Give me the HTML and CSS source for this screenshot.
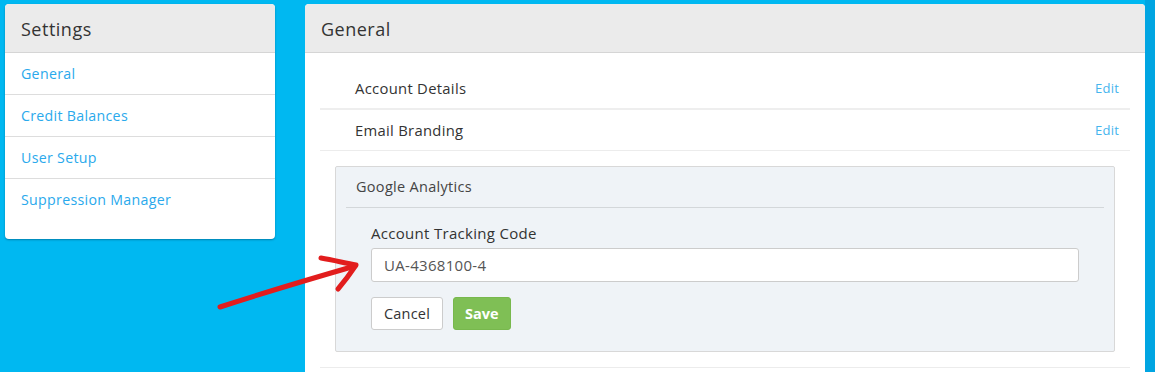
FILE: index.html
```html
<!DOCTYPE html>
<html>
  <head>
    <meta charset="UTF-8" />
    <title>Settings</title>
    <link rel="stylesheet" href="styles.css">
  </head>
  <body>
    <div class="page">
      <div class="card sidebar">
        <div class="card-header">Settings</div>
        <ul class="nav">
          <li><a href="#">General</a></li>
          <li><a href="#">Credit Balances</a></li>
          <li><a href="#">User Setup</a></li>
          <li><a href="#">Suppression Manager</a></li>
        </ul>
      </div>

      <div class="card main">
        <div class="card-header">General</div>
        <div class="card-body">
          <div class="row first">
            <span>Account Details</span>
            <a href="#" class="edit">Edit</a>
          </div>
          <div class="row">
            <span>Email Branding</span>
            <a href="#" class="edit">Edit</a>
          </div>
          <div class="row open">
            <div class="panel">
              <div class="panel-header">Google Analytics</div>
              <div class="panel-form">
                <label for="tracking">Account Tracking Code</label>
                <input id="tracking" type="text" value="UA-4368100-4" />
                <div class="actions">
                  <button class="btn">Cancel</button>
                  <button class="btn btn-save">Save</button>
                </div>
              </div>
            </div>
          </div>
        </div>
      </div>

      <div class="edge"></div>
    </div>

    <!-- hand drawn arrow on top of the screenshot -->
    <svg class="arrow" width="160" height="70" viewBox="0 0 160 70">
      <g fill="none" stroke="#e21d1d" stroke-width="5" stroke-linecap="round" stroke-linejoin="round">
        <path d="M5 63 C45 50 95 35 140 22" />
        <path d="M106 14 C118 16 130 19 141 21 C135 30 129 38 123 45" />
      </g>
    </svg>
  </body>
</html>
```

FILE: styles.css
```css
body {
  margin: 0;
  background-color: #00b8f1;
  font-family: "Open Sans", Arial, sans-serif;
  color: #333333;
  letter-spacing: 0.3px;
  overflow: hidden;
}
a {
  text-decoration: none;
}
.page {
  display: flex;
  align-items: flex-start;
  height: 372px;
  padding: 4px 0 0 5px;
  box-sizing: border-box;
}
.card {
  background-color: #ffffff;
  border-radius: 4px;
  overflow: hidden;
}
.card-header {
  height: 48px;
  line-height: 50px;
  padding-left: 16px;
  background-color: #ebebeb;
  border-bottom: 1px solid #d5d5d5;
  font-size: 18px;
  letter-spacing: 0.5px;
  color: #333333;
}
.sidebar {
  width: 270px;
  box-shadow: 0 1px 2px rgba(0, 60, 90, 0.45);
}
.nav {
  list-style: none;
  margin: 0;
  padding: 0 0 19px 0;
}
.nav li {
  height: 41px;
  line-height: 42px;
  padding-left: 16px;
  border-bottom: 1px solid #dddddd;
  font-size: 14.2px;
}
.nav li:last-child {
  border-bottom: none;
}
.nav a {
  color: #2aa9ec;
}
.main {
  width: 840px;
  margin-left: 30px;
  height: 400px;
  border-radius: 4px 4px 0 0;
}
.card-body {
  padding: 14px 15px 0 15px;
}
.row {
  display: flex;
  justify-content: space-between;
  align-items: center;
  height: 40px;
  padding: 0 11px 0 35px;
  border-bottom: 1px solid #ececec;
  font-size: 14.8px;
  color: #333333;
}
.row.first {
  height: 41px;
  border-bottom: 2px solid #eeeeee;
}
.edit {
  font-size: 13px;
  letter-spacing: 0.2px;
  color: #45b5ee;
}
.row.open {
  display: block;
  height: auto;
  padding: 15px;
}
.panel {
  background-color: #eff3f7;
  border: 1px solid #d8d8d8;
  border-radius: 2px;
}
.panel-header {
  height: 40px;
  line-height: 40px;
  margin: 0 10px;
  padding-left: 10px;
  border-bottom: 1px solid #d3d7da;
  font-size: 14.5px;
  color: #444444;
}
.panel-form {
  padding: 15px 35px 21px 35px;
}
.panel-form label {
  display: block;
  font-size: 15px;
  font-weight: 500;
  color: #333333;
  margin-bottom: 5px;
}
.panel-form input {
  display: block;
  width: 100%;
  height: 34px;
  box-sizing: border-box;
  padding: 0 12px;
  border: 1px solid #cccccc;
  border-radius: 3px;
  font-family: inherit;
  font-size: 15px;
  letter-spacing: 0.3px;
  color: #555555;
  background-color: #ffffff;
}
.actions {
  display: flex;
  gap: 10px;
  margin-top: 15px;
}
.btn {
  height: 33px;
  padding: 0 12px;
  border: 1px solid #cccccc;
  border-radius: 3px;
  background-color: #ffffff;
  font-family: inherit;
  font-size: 14.5px;
  letter-spacing: 0.2px;
  color: #333333;
}
.btn-save {
  border-color: #78b84d;
  background-color: #7fbf55;
  color: #ffffff;
  font-weight: bold;
  letter-spacing: 0;
  padding: 0 11px;
}
.edge {
  position: fixed;
  top: 0;
  right: 0;
  width: 10px;
  height: 100%;
  background-color: #00a5e2;
}
.arrow {
  position: absolute;
  left: 215px;
  top: 244px;
}
```
